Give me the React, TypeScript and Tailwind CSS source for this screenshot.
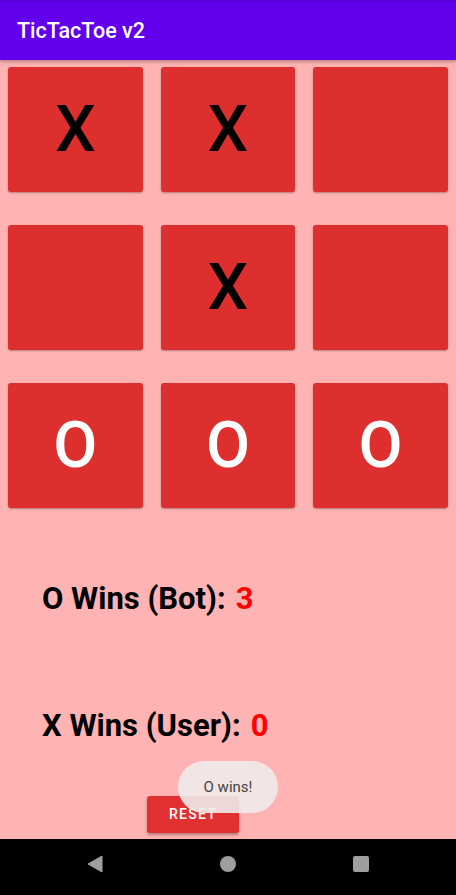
import React from 'react';

const board: string[] = ['X', 'X', '', '', 'X', '', 'O', 'O', 'O'];

function Cell({ value }: { value: string }) {
    return (
        <div className="h-[125px] rounded-[3px] bg-[#de2f2f] shadow-[0_1px_2px_rgba(0,0,0,0.3)] flex items-center justify-center">
            <span className={value === 'O' ? 'text-white text-[64px] font-medium leading-none' : 'text-black text-[64px] font-medium leading-none'}>
                {value}
            </span>
        </div>
    );
}

function NavBar() {
    return (
        <div className="h-[56px] bg-black flex items-center justify-center gap-[117px] pb-[6px]">
            <svg width="16" height="18" viewBox="0 0 16 18">
                <path d="M15 1 L15 17 L1 9 Z" fill="#9e9e9e" stroke="#9e9e9e" strokeWidth="1" strokeLinejoin="round" />
            </svg>
            <div className="w-[16px] h-[16px] rounded-full bg-[#9e9e9e]" />
            <div className="w-[16px] h-[16px] rounded-[2px] bg-[#9e9e9e]" />
        </div>
    );
}

export default function App() {
    return (
        <div className="relative w-[456px] h-[895px] flex flex-col bg-[#ffb3b3] overflow-hidden" style={{ fontFamily: 'Roboto, "Noto Sans", sans-serif' }}>
            <header className="h-[60px] bg-[#6200ee] border-t border-[#5300cc] flex items-center px-[17px] shadow-[0_2px_3px_rgba(0,0,0,0.25)]">
                <h1 className="text-white text-[21.5px] font-medium leading-none">TicTacToe v2</h1>
            </header>

            <main className="flex-1 flex flex-col">
                <div className="grid grid-cols-3 gap-x-[18px] gap-y-[33px] px-2 pt-[7px]">
                    {board.map((v, i) => (
                        <Cell key={i} value={v} />
                    ))}
                </div>

                <div className="pl-[42px] mt-[73px] flex flex-col gap-[91px]">
                    <p className="text-[31px] font-bold leading-[36px] text-black">
                        O Wins (Bot):<span className="ml-[10px] text-[#ff0000]">3</span>
                    </p>
                    <p className="text-[31px] font-bold leading-[36px] text-black">
                        X Wins (User):<span className="ml-[10px] text-[#ff0000]">0</span>
                    </p>
                </div>

                <button className="ml-[147px] mt-[52px] w-[92px] h-[37px] rounded-[3px] bg-[#e03030] text-white text-[14px] font-medium tracking-[1.25px] shadow-[0_2px_3px_rgba(0,0,0,0.3)]">
                    RESET
                </button>
            </main>

            <NavBar />

            <div className="absolute left-[178px] top-[761px] w-[100px] h-[52px] rounded-full bg-[rgba(240,234,234,0.9)] flex items-center justify-center">
                <span className="text-[15px] text-[#444]">O wins!</span>
            </div>
        </div>
    );
}
